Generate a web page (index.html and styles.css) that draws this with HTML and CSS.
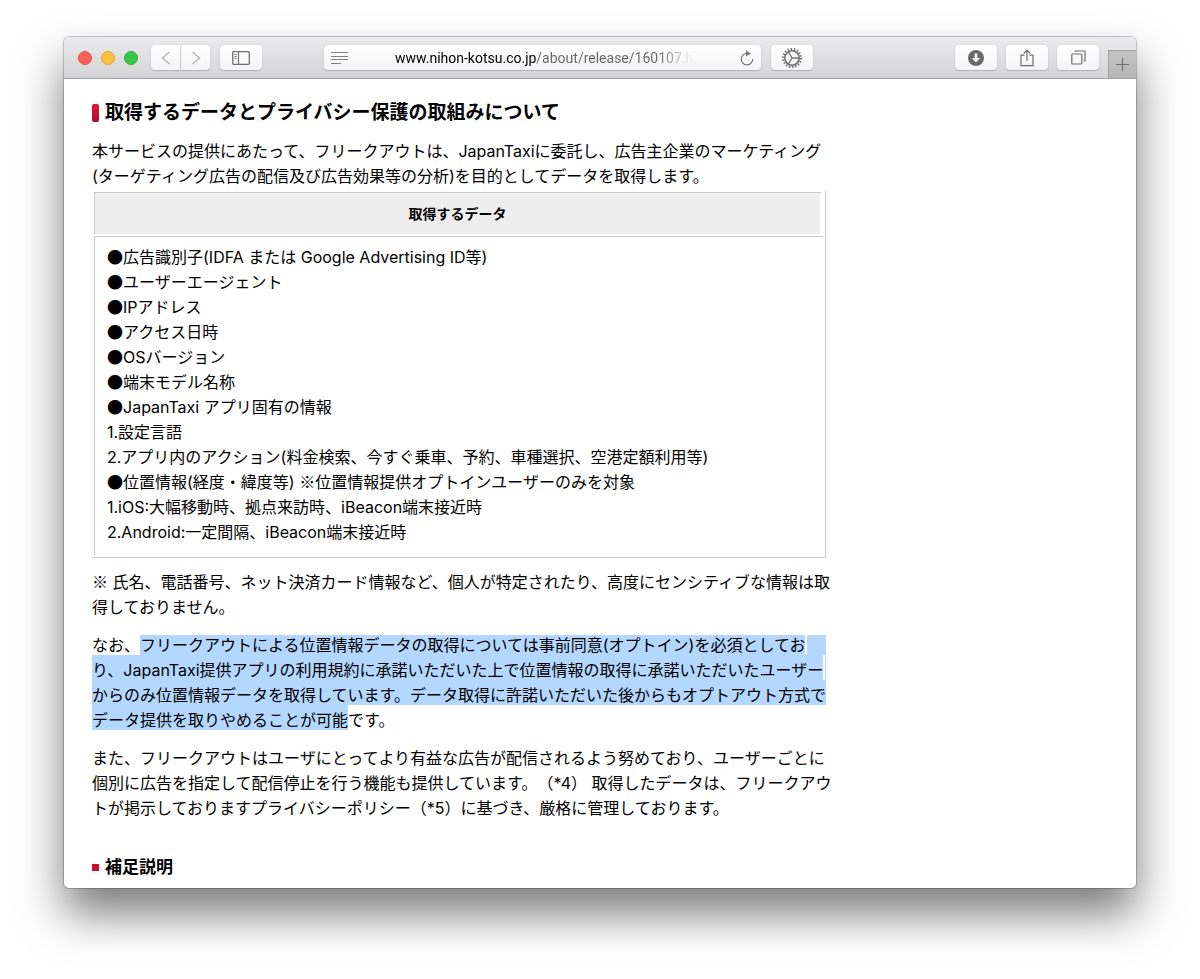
FILE: index.html
```
<!DOCTYPE html>
<html lang="ja">
<head>
  <meta charset="UTF-8">
  <meta name="viewport" content="width=device-width, initial-scale=1">
  <title>日本交通</title>
  <link rel="stylesheet" href="styles.css">
</head>
<body>
  <div class="window">
    <header class="toolbar">
      <div class="lights">
        <button class="light red" aria-label="閉じる"></button>
        <button class="light yellow" aria-label="しまう"></button>
        <button class="light green" aria-label="フルスクリーン"></button>
      </div>
      <div class="nav">
        <button class="btn btn-nav" aria-label="戻る">
          <svg width="10" height="14" viewBox="0 0 10 14"><path d="M8.500 1 1.500 7l7 6" stroke="#b4b4b4" stroke-width="1.4"/></svg>
        </button>
        <button class="btn btn-nav" aria-label="進む">
          <svg width="10" height="14" viewBox="0 0 10 14"><path d="m1.500 1 7 6-7 6" stroke="#b4b4b4" stroke-width="1.4"/></svg>
        </button>
      </div>
      <button class="btn" aria-label="サイドバー">
        <svg width="18" height="14" viewBox="0 0 18 14"><rect x=".7" y=".7" width="16.6" height="12.6" rx="1" stroke-width="1.3"/><path d="M6.5 1v12" stroke-width="1.2"/><path d="M2.5 3.5h2M2.5 5.5h2M2.5 7.5h2" stroke-width="1"/></svg>
      </button>

      <div class="address">
        <svg width="17" height="12" viewBox="0 0 17 12"><path d="M0 .5h17M0 4.5h17M0 7.5h17M0 11.5h10" stroke="#808080"/></svg>
        <input class="url" type="text" aria-label="アドレス" value="www.nihon-kotsu.co.jp/about/release/160107.html">
        <button class="reload" aria-label="再読み込み">
          <svg width="14" height="16" viewBox="0 0 14 16"><path d="M7.5 3.5A5.7 5.7 0 1 0 12.7 9" stroke-width="1.2"/><path d="M6 .5v6l5-3z" fill="#777" stroke="none"/></svg>
        </button>
      </div>
      <button class="btn" aria-label="設定">
        <svg width="22" height="22" viewBox="0 0 22 22">
          <circle cx="11" cy="11" r="7.2" stroke-width="1.6"/>
          <circle cx="11" cy="11" r="9" stroke-width="2.2" stroke-dasharray="1.4 1.742"/>
          <path d="M11 11h7M11 11 7.4 4.8M11 11l-3.6 6.2" stroke-width="1.3"/>
        </svg>
      </button>

      <div class="actions">
        <button class="btn" aria-label="ダウンロード">
          <svg width="16" height="16" viewBox="0 0 16 16"><circle cx="8" cy="8" r="8" fill="#6b6b6b" stroke="none"/><path d="M8 3.5v6" stroke="#fff" stroke-width="2.4"/><path d="M4 8h8l-4 4.5z" fill="#fff" stroke="none"/></svg>
        </button>
        <button class="btn" aria-label="共有">
          <svg width="14" height="18" viewBox="0 0 14 18"><path d="M4.5 6.2H1v10.5h12V6.2H9.500M7 12V1.500M3.700 4.500 7 1.200l3.300 3.300" stroke-width="1.2"/></svg>
        </button>
        <button class="btn" aria-label="タブ一覧">
          <svg width="15" height="15" viewBox="0 0 15 15"><rect x=".8" y="4" width="10" height="10" rx=".8" stroke-width="1.2"/><path d="M4.300 2V1h9.700v9.700h-1.200" stroke-width="1.200"/></svg>
        </button>
      </div>
      <button class="new-tab" aria-label="新規タブ">
        <svg width="13" height="13" viewBox="0 0 13 13"><path d="M6.500 0v13M0 6.500h13" stroke-width="1.200"/></svg>
      </button>
    </header>

    <main class="page">
      <h2>取得するデータとプライバシー保護の取組みについて</h2>
      <p>本サービスの提供にあたって、フリークアウトは、JapanTaxiに委託し、広告主企業のマーケティング<br>
      (ターゲティング広告の配信及び広告効果等の分析)を目的としてデータを取得します。</p>

      <table class="data">
        <tr><th>取得するデータ</th></tr>
        <tr>
          <td>
            <span class="sym">●</span>広告識別子(IDFA または Google Advertising ID等)<br>
            <span class="sym">●</span>ユーザーエージェント<br>
            <span class="sym">●</span>IPアドレス<br>
            <span class="sym">●</span>アクセス日時<br>
            <span class="sym">●</span>OSバージョン<br>
            <span class="sym">●</span>端末モデル名称<br>
            <span class="sym">●</span>JapanTaxi アプリ固有の情報<br>
            1.設定言語<br>
            2.アプリ内のアクション(料金検索、今すぐ乗車、予約、車種選択、空港定額利用等)<br>
            <span class="sym">●</span>位置情報(経度・緯度等) <span class="sym">※</span>位置情報提供オプトインユーザーのみを対象<br>
            1.iOS:大幅移動時、拠点来訪時、iBeacon端末接近時<br>
            2.Android:一定間隔、iBeacon端末接近時
          </td>
        </tr>
      </table>

      <p class="note"><span class="sym">※</span> 氏名、電話番号、ネット決済カード情報など、個人が特定されたり、高度にセンシティブな情報は取<br>
      得しておりません。</p>

      <p class="selected">
        <span class="line"><span>なお、</span><mark>フリークアウトによる位置情報データの取得については事前同意(オプトイン)を必須としてお</mark></span>
        <span class="line"><mark>り、JapanTaxi提供アプリの利用規約に承諾いただいた上で位置情報の取得に承諾いただいたユーザー</mark></span>
        <span class="line"><mark>からのみ位置情報データを取得しています。データ取得に許諾いただいた後からもオプトアウト方式で</mark></span>
        <span class="line end"><mark>データ提供を取りやめることが可能</mark><span>です。</span></span>
      </p>

      <p class="last">また、フリークアウトはユーザにとってより有益な広告が配信されるよう努めており、ユーザーごとに<br>
      個別に広告を指定して配信停止を行う機能も提供しています。（*4） 取得したデータは、フリークアウ<br>
      トが掲示しておりますプライバシーポリシー（*5）に基づき、厳格に管理しております。</p>

      <h3>補足説明</h3>
    </main>
  </div>
</body>
</html>
```
FILE: styles.css
```
* {
  box-sizing: border-box;
}
body {
  display: flex;
  min-height: 100vh;
  margin: 0;
  padding: 37px 64px 91px;
  background: #fff;
  color: #000;
  font-family: Inter, "Noto Sans CJK JP", sans-serif;
  font-size: 16px;
  line-height: 25px;
}
.window {
  flex: 1;
  min-width: 0;
  border-radius: 5px;
  overflow: hidden;
  background: #fff;
  box-shadow: 0 0 0 1px rgba(0,0,0,0.2), 0 25px 46px rgba(0,0,0,0.53);
}

/* toolbar */
.toolbar {
  display: flex;
  align-items: center;
  height: 42px;
  padding-left: 14px;
  background: linear-gradient(#ebeaec, #d4d3d5);
  border-bottom: 1px solid #a3a3a3;
}
.toolbar svg {
  display: block;
  fill: none;
  stroke: #6f6f6f;
}
.toolbar button {
  padding: 0;
  border: none;
}
.lights {
  display: flex;
  gap: 9px;
}
.toolbar .light {
  width: 14px;
  height: 14px;
  border-radius: 50%;
}
.toolbar .red {
  background: #fc605b;
  border: 1px solid #e2504b;
}
.toolbar .yellow {
  background: #fdbe41;
  border: 1px solid #e0a53a;
}
.toolbar .green {
  background: #34c84a;
  border: 1px solid #2cae3a;
}
.nav {
  display: flex;
  gap: 1px;
  margin: 0 10px 0 13px;
}
.btn {
  display: flex;
  align-items: center;
  justify-content: center;
  flex: none;
  width: 42px;
  height: 25px;
  border-radius: 4px;
  background: linear-gradient(#fff, #f4f4f4);
  box-shadow: 0 0 1px rgba(0,0,0,0.35), 0 1px 1px rgba(0,0,0,0.15);
}
.btn-nav {
  width: 29px;
}
.btn-nav:first-child {
  border-radius: 4px 0 0 4px;
}
.btn-nav:last-child {
  border-radius: 0 4px 4px 0;
}
.address {
  display: flex;
  align-items: center;
  justify-content: space-between;
  flex: 1;
  height: 25px;
  margin: 0 10px 0 62px;
  padding: 0 7px;
  border-radius: 4px;
  background: linear-gradient(#fff, #f4f4f4);
  box-shadow: 0 0 1px rgba(0,0,0,0.35), 0 1px 1px rgba(0,0,0,0.15);
}
.url {
  width: 298px;
  padding: 0;
  border: none;
  background: linear-gradient(90deg, #000 141px, #666 141px);
  -webkit-background-clip: text;
  background-clip: text;
  color: transparent;
  font: 14px Roboto, sans-serif;
  -webkit-mask-image: linear-gradient(90deg, #000 88%, transparent);
  mask-image: linear-gradient(90deg, #000 88%, transparent);
}
.reload {
  background: none;
}
.actions {
  display: flex;
  gap: 9px;
  margin: 0 9px 0 142px;
}
.toolbar .new-tab {
  display: flex;
  align-items: center;
  justify-content: center;
  align-self: flex-end;
  width: 28px;
  height: 28px;
  background: linear-gradient(#c4c4c4, #b5b5b5);
  border: 1px solid #a0a0a0;
  border-width: 1px 0 0 1px;
}

/* page */
.page {
  max-width: 790px;
  padding: 21px 28px 7px;
  white-space: nowrap;
  text-spacing-trim: space-all;
}
h2, h3, p {
  margin: 0;
}
h2, h3 {
  display: flex;
  align-items: center;
  gap: 6px;
}
h2 {
  margin-bottom: 14px;
  font-size: 19px;
}
h2::before {
  content: "";
  width: 7px;
  height: 18px;
  border-radius: 2px;
  background: linear-gradient(#e3173a, #b00a26);
}
h3 {
  font-size: 17px;
}
h3::before {
  content: "";
  width: 7px;
  height: 7px;
  background: #cb1030;
}
.sym {
  font-family: "Noto Sans CJK JP", sans-serif;
  line-height: 1;
}
.data {
  width: 100%;
  margin-top: 1px;
  border-right: 1px solid #ccc;
  border-bottom: 1px solid #ccc;
  border-spacing: 2px;
}
.data th {
  height: 42px;
  padding: 0;
  border-top: 1px solid #ccc;
  border-left: 1px solid #ccc;
  border-right: 3px solid #fff;
  background: #eee;
  font-size: 14px;
}
.data td {
  padding: 8px 12px 10px;
  border-top: 1px solid #ccc;
  border-left: 1px solid #ccc;
}
.note {
  margin: 12px 0 15px;
}
.selected {
  line-height: 20px;
}
.line {
  display: flex;
}
.line + .line > *,
.line + .line::after {
  padding-top: 5px;
}
/* selection runs on to the right edge after a wrapped line */
.line::after {
  content: "";
  flex: 1;
  margin-left: 2px;
  background: #b3d7ff;
}
.line.end::after {
  content: none;
}
mark {
  background: #b3d7ff;
  color: #000;
}
.last {
  margin: 16px 0 34px;
}
```
